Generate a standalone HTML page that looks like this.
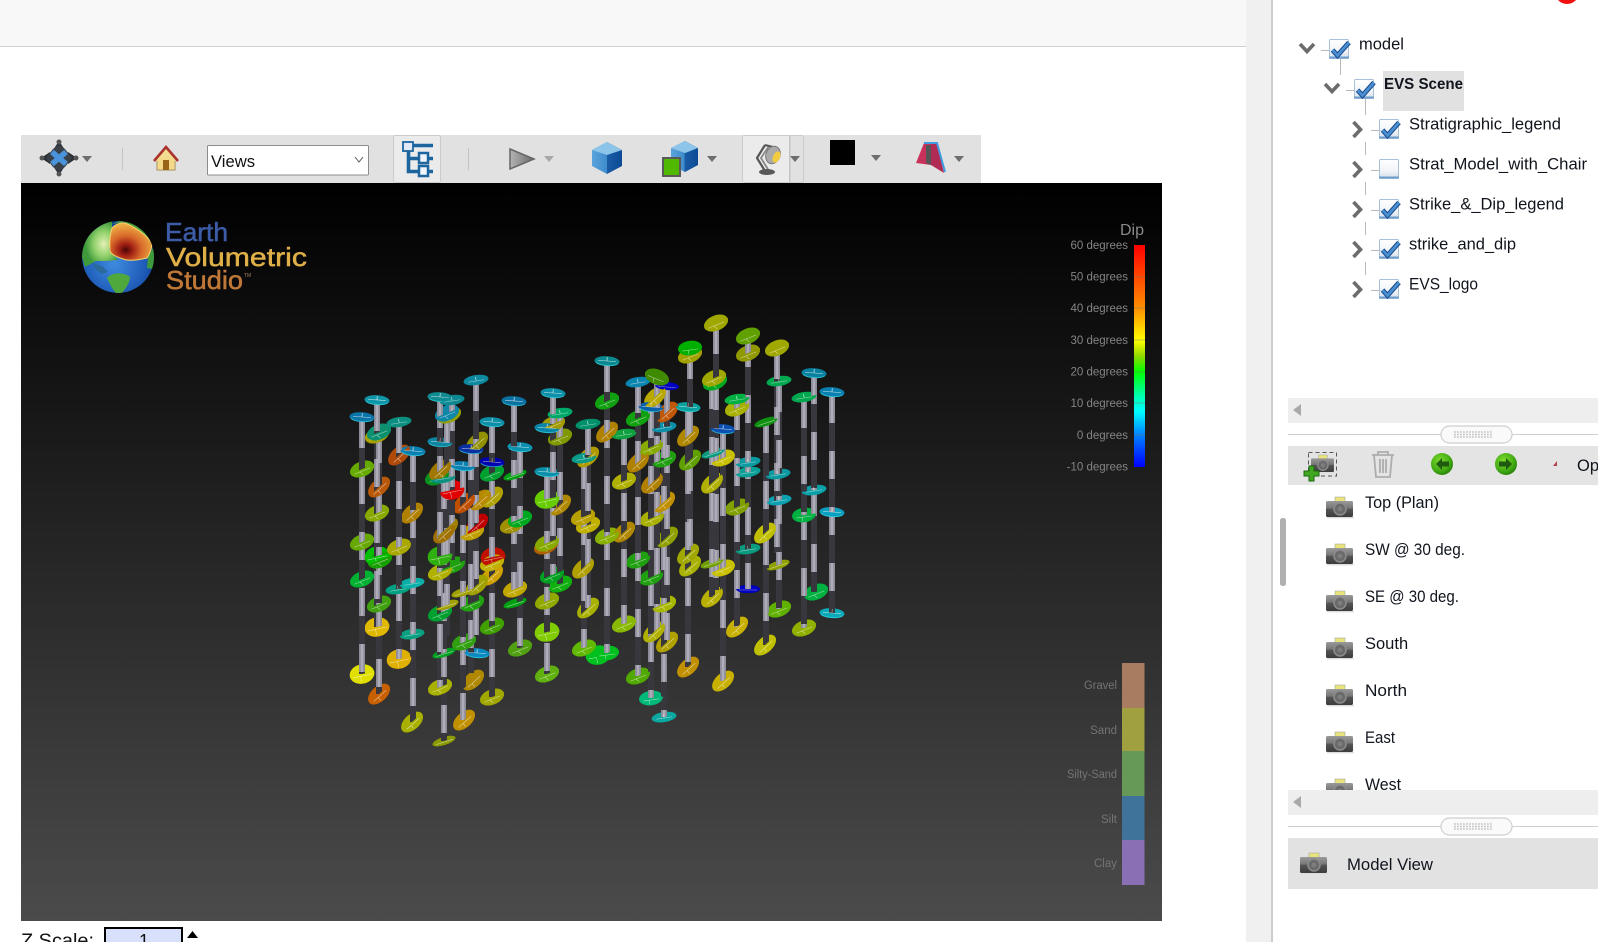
<!DOCTYPE html>
<html lang="en"><head><meta charset="utf-8"><title>EVS Model</title>
<style>
html,body{margin:0;padding:0;width:1598px;height:942px;overflow:hidden;background:#fff}
svg{position:absolute;left:0;top:0;display:block}
text{font-family:"Liberation Sans",sans-serif}
.v{visibility:var(--f,visible)}
.t{stroke:#fff;stroke-width:.6;opacity:.6;fill:none}
.p{font-size:16.5px;fill:#10141c}
.dg{font-size:11.5px;fill:#858585;text-anchor:end}
.lg{font-size:11.5px;fill:#747474;text-anchor:end}
.ar{fill:#6e6e6e}
.arl{fill:#a8a8a8}
.ln{stroke:#b9b9b9;stroke-width:1;fill:none}
.ch{stroke:#6c6c6c;stroke-width:3.6;fill:none}
</style></head><body>
<svg width="1598" height="942" viewBox="0 0 1598 942" xmlns="http://www.w3.org/2000/svg">
<defs>
<linearGradient id="bg" x1="0" y1="0" x2="0" y2="1"><stop offset="0" stop-color="#000"/><stop offset="1" stop-color="#4b4b4b"/></linearGradient>
<linearGradient id="rb" x1="0" y1="0" x2="0" y2="1"><stop offset="0" stop-color="#f00"/><stop offset=".143" stop-color="#ff4800"/><stop offset=".286" stop-color="#ff9000"/><stop offset=".43" stop-color="#ff0"/><stop offset=".5" stop-color="#90d800"/><stop offset=".571" stop-color="#0f0"/><stop offset=".68" stop-color="#00ffb0"/><stop offset=".75" stop-color="#0ff"/><stop offset=".857" stop-color="#0080ff"/><stop offset="1" stop-color="#00f"/></linearGradient>
<linearGradient id="cg" x1="0" y1="0" x2="0" y2="1"><stop offset="0" stop-color="#9a9a9a"/><stop offset=".45" stop-color="#777"/><stop offset=".5" stop-color="#555"/><stop offset="1" stop-color="#3c3c3c"/></linearGradient>
<linearGradient id="ck" x1="0" y1="0" x2="0" y2="1"><stop offset="0" stop-color="#fff"/><stop offset=".6" stop-color="#f2f4f8"/><stop offset="1" stop-color="#d3dde9"/></linearGradient>
<linearGradient id="cb" x1="0" y1="0" x2="1" y2="0"><stop offset="0" stop-color="#5aa4dc"/><stop offset=".5" stop-color="#3f8ccc"/><stop offset=".5" stop-color="#1a5ca6"/><stop offset="1" stop-color="#0c4a94"/></linearGradient>
<linearGradient id="pl" x1="0" y1="0" x2="1" y2="0"><stop offset="0" stop-color="#b4b4b4"/><stop offset="1" stop-color="#6a6a6a"/></linearGradient>
<radialGradient id="gl" cx=".45" cy=".6" r=".65"><stop offset="0" stop-color="#3f8be0"/><stop offset=".7" stop-color="#1c58b4"/><stop offset="1" stop-color="#0e3478"/></radialGradient>
<radialGradient id="gb" cx=".6" cy=".5" r=".5"><stop offset="0" stop-color="#e4f0b4"/><stop offset=".55" stop-color="#8fd06a"/><stop offset="1" stop-color="#3f9a3c"/></radialGradient>
<radialGradient id="gc" cx=".38" cy=".72" r=".72"><stop offset="0" stop-color="#4a0606"/><stop offset=".22" stop-color="#a02014"/><stop offset=".52" stop-color="#d8682a"/><stop offset="1" stop-color="#f0b848"/></radialGradient>
<radialGradient id="gn" cx=".4" cy=".35" r=".7"><stop offset="0" stop-color="#7fdc2c"/><stop offset=".7" stop-color="#3fa812"/><stop offset="1" stop-color="#277a08"/></radialGradient>
<clipPath id="ce"><circle cx="118" cy="257" r="36"/></clipPath>
<clipPath id="vw"><rect x="1288" y="485" width="310" height="305"/></clipPath>

<g id="cam"><rect x="9" y="0" width="10" height="5" fill="#e8e47a" stroke="#999" stroke-width=".5"/><rect x="0" y="4" width="27" height="16" rx="1.5" fill="url(#cg)"/><circle cx="14" cy="12" r="6" fill="#6a6a6a" stroke="#8c8c8c" stroke-width="1.5"/><circle cx="14" cy="12" r="2.4" fill="#7e7e7e"/><rect x="1" y="20" width="27" height="1.4" fill="#ddd"/></g>

<g id="cbx"><rect x=".5" y=".5" width="19" height="19" rx="1" fill="url(#ck)" stroke="#a9c0da"/><path d="M0 18.5H20" stroke="#6f9fcf" stroke-width="2"/></g>
<g id="cbc"><use href="#cbx"/><path d="M3.500 11L8.500 16.500L20 3.500" fill="none" stroke="#1c4f8e" stroke-width="4.800"/><path d="M3.500 11L8.500 16.500L20 3.500" fill="none" stroke="#4a90d2" stroke-width="2.600"/></g>
<path id="ard" d="M-5-3H5L0 3Z"/>

<g id="pill"><rect x="0" y="0" width="71" height="17" rx="8.5" fill="#fafafa" stroke="#cfcfcf" stroke-width="1.2"/><path d="M13 6H52M13 8.5H52M13 11H52" stroke="#c4c4c4" stroke-width="1.6" stroke-dasharray="1.8 1.2"/></g>

<g id="d" transform="rotate(-22)"><ellipse class="v" rx="12.6" ry="7.6"/><path d="M-12.600 0A12.600 7.600 0 0 0 12.600 0Z"/><path class="t" d="M-9 2H8M-3 2L-1 6"/></g>
<g id="e" transform="rotate(-42)"><ellipse class="v" rx="13" ry="7.6"/><path d="M-13 0A13 7.600 0 0 0 13 0Z"/><path class="t" d="M-9 2H8M-3 2V6"/></g>
<g id="f" transform="rotate(4)"><ellipse class="v" rx="12.5" ry="4.8"/><path d="M-12.5 0A12.5 4.8 0 0 0 12.5 0Z"/><path d="M-11 2A12 4.2 0 0 0 11 2" fill="none" stroke="#38e6f0" stroke-width="1" opacity=".55"/><path class="t" d="M-9 0H9M0 0V-4"/></g>
<g id="g" transform="rotate(-9)"><ellipse class="v" rx="12.5" ry="5"/><path d="M-12.5 0A12.5 5 0 0 0 12.5 0Z"/><path class="t" d="M-8 1H8M0 1V-3"/></g>
<g id="h" transform="rotate(-8)"><ellipse class="v" rx="12" ry="7.2"/><path d="M-12 0A12 7.200 0 0 0 12 0Z"/><path class="t" d="M-8 2H8M-2 2V6"/></g>
<g id="r" transform="rotate(-12)"><ellipse class="v" rx="12.4" ry="9.6"/><path d="M-12.400 0A12.400 9.600 0 0 0 12.400 0Z"/><path class="t" d="M-10 2H10M-2 2V8"/></g>
<g id="n" transform="rotate(-18)"><ellipse class="v" rx="12" ry="4"/><path d="M-12 0A12 4 0 0 0 12 0Z"/><path class="t" d="M-9 1H9"/></g>

<g id="D">
<use href="#f" x="362" y="417" fill="#0a74a8"/><use href="#f" x="377" y="400" fill="#0f95a8"/><use href="#g" x="399" y="422" fill="#0c8f80"/>
<use href="#d" x="377" y="435" fill="#a8a000"/><use href="#d" x="379" y="432" fill="#0c9070"/>
<use href="#d" x="362" y="469" fill="#66aa00"/><use href="#e" x="399" y="455" fill="#b04a08"/><use href="#f" x="413" y="451" fill="#0a80b0"/>
<use href="#e" x="379" y="487" fill="#b85808"/><use href="#d" x="377" y="513" fill="#88aa00"/><use href="#e" x="412" y="513" fill="#b08000"/>
<use href="#f" x="440" y="397" fill="#0f8a90"/><use href="#g" x="452" y="400" fill="#0c8890"/>
<use href="#d" x="449" y="415" fill="#90a000"/><use href="#d" x="447" y="413" fill="#0d86a8"/>
<use href="#g" x="476" y="380" fill="#0d8aa0"/><use href="#f" x="492" y="422" fill="#0d8fa8"/><use href="#f" x="514" y="401" fill="#0a70a0"/>
<use href="#f" x="440" y="442" fill="#0d85a0"/><use href="#e" x="477" y="442" fill="#909000"/><use href="#f" x="471" y="449" fill="#0a30a0"/>
<use href="#f" x="492" y="462" fill="#0000b0"/><use href="#f" x="463" y="466" fill="#0a80b0"/>
<use href="#d" x="437" y="477" fill="#089020"/><use href="#e" x="440" y="470" fill="#a07800"/><use href="#g" x="443" y="478" fill="#0a9080"/>
<use href="#f" x="520" y="447" fill="#0c90b0"/><use href="#d" x="492" y="473" fill="#00a030"/><use href="#n" x="515" y="475" fill="#00a010"/>
<use href="#f" x="547" y="472" fill="#0c8fa8"/><use href="#f" x="553" y="393" fill="#0d90a8"/><use href="#g" x="560" y="413" fill="#00a868"/>
<use href="#d" x="553" y="424" fill="#a09a00"/><use href="#f" x="547" y="428" fill="#0a85a8"/><use href="#d" x="560" y="437" fill="#809800"/>
<use href="#g" x="588" y="424" fill="#00906a"/><use href="#e" x="588" y="457" fill="#b09a00"/><use href="#g" x="584" y="458" fill="#0a9a88"/>
<use href="#r" x="547" y="499" fill="#66cc00"/><use href="#e" x="560" y="505" fill="#b08800"/>
<use href="#d" x="512" y="525" fill="#a09000"/><use href="#d" x="520" y="519" fill="#00a820"/><use href="#d" x="583" y="517" fill="#b8a000"/><use href="#d" x="588" y="525" fill="#c0b000"/>
<use href="#r" x="452" y="490" fill="#e00000"/><use href="#e" x="464" y="503" fill="#c05000"/><use href="#e" x="480" y="500" fill="#b88800"/><use href="#e" x="492" y="497" fill="#b0a000"/>
<use href="#e" x="477" y="524" fill="#c00000"/><use href="#e" x="447" y="528" fill="#a08000"/>
<use href="#d" x="362" y="542" fill="#66a800"/><use href="#r" x="377" y="556" fill="#00c000"/><use href="#d" x="380" y="560" fill="#18a000"/><use href="#d" x="399" y="547" fill="#a8a800"/>
<use href="#d" x="362" y="579" fill="#00b030"/><use href="#g" x="398" y="589" fill="#00a080"/><use href="#g" x="412" y="583" fill="#0ab0a8"/>
<use href="#d" x="379" y="604" fill="#40a010"/><use href="#r" x="377" y="627" fill="#e0b800"/><use href="#g" x="412" y="634" fill="#08a080"/>
<use href="#r" x="399" y="659" fill="#e0b000"/><use href="#r" x="362" y="674" fill="#e0e000"/><use href="#e" x="379" y="694" fill="#c86000"/>
<use href="#e" x="412" y="722" fill="#a8b000"/><use href="#r" x="440" y="556" fill="#30b010"/><use href="#d" x="453" y="565" fill="#20a010"/>
<use href="#d" x="440" y="572" fill="#b0b000"/><use href="#e" x="444" y="533" fill="#a07000"/><use href="#d" x="472" y="532" fill="#c0a000"/>
<use href="#r" x="493" y="557" fill="#c01000"/><use href="#d" x="492" y="563" fill="#c0b000"/><use href="#e" x="492" y="575" fill="#d0a000"/>
<use href="#e" x="477" y="585" fill="#a0a000"/><use href="#n" x="463" y="592" fill="#a0a000"/><use href="#n" x="447" y="605" fill="#a0a000"/>
<use href="#d" x="440" y="613" fill="#00a030"/><use href="#d" x="472" y="603" fill="#20a010"/><use href="#d" x="492" y="626" fill="#40a000"/>
<use href="#d" x="464" y="642" fill="#30a010"/><use href="#n" x="444" y="653" fill="#00a020"/><use href="#f" x="477" y="653" fill="#0a88c0"/>
<use href="#d" x="440" y="687" fill="#a8b000"/><use href="#e" x="473" y="680" fill="#b08800"/><use href="#d" x="492" y="697" fill="#a0a800"/>
<use href="#e" x="464" y="720" fill="#c09000"/><use href="#n" x="444" y="741" fill="#8a9a00"/>
<use href="#d" x="515" y="589" fill="#c0a800"/><use href="#n" x="515" y="603" fill="#00a010"/><use href="#d" x="520" y="648" fill="#50a010"/>
<use href="#d" x="546" y="546" fill="#b06000"/><use href="#d" x="547" y="543" fill="#88aa00"/><use href="#d" x="552" y="575" fill="#00a020"/><use href="#d" x="560" y="584" fill="#10b010"/>
<use href="#e" x="583" y="568" fill="#b0a000"/><use href="#d" x="547" y="601" fill="#90a800"/><use href="#r" x="547" y="632" fill="#80cc00"/>
<use href="#e" x="588" y="608" fill="#a8b000"/><use href="#d" x="547" y="674" fill="#60b010"/><use href="#d" x="584" y="648" fill="#60b800"/><use href="#r" x="598" y="655" fill="#00c020"/>
<use href="#f" x="607" y="361" fill="#0a8a90"/><use href="#d" x="607" y="401" fill="#10a010"/><use href="#e" x="607" y="432" fill="#b08000"/>
<use href="#g" x="638" y="382" fill="#0a85b0"/><use href="#d" x="657" y="377" fill="#408a00" transform="rotate(44 657 377)"/><use href="#n" x="667" y="386" fill="#0000c0" transform="rotate(22 667 386)"/>
<use href="#e" x="655" y="397" fill="#b8a800"/><use href="#f" x="651" y="407" fill="#0a60a8"/><use href="#e" x="667" y="412" fill="#c05808"/>
<use href="#d" x="638" y="418" fill="#10a010"/><use href="#g" x="664" y="427" fill="#0a90a8"/><use href="#f" x="688" y="407" fill="#0aa0a0"/>
<use href="#g" x="624" y="434" fill="#10a040"/><use href="#e" x="688" y="436" fill="#b08800"/><use href="#d" x="651" y="447" fill="#88aa00"/>
<use href="#e" x="638" y="462" fill="#b08000"/><use href="#d" x="664" y="459" fill="#20a010"/><use href="#d" x="624" y="481" fill="#b0b000"/>
<use href="#e" x="652" y="483" fill="#b08000"/><use href="#e" x="664" y="502" fill="#c09000"/><use href="#e" x="690" y="460" fill="#60a000"/>
<use href="#d" x="690" y="355" fill="#a0a000"/><use href="#h" x="690" y="348" fill="#00b000"/><use href="#d" x="716" y="323" fill="#a0a800"/>
<use href="#d" x="715" y="382" fill="#00a820"/><use href="#d" x="714" y="378" fill="#a0a800"/><use href="#d" x="748" y="336" fill="#60a000"/><use href="#d" x="748" y="353" fill="#909a00"/>
<use href="#d" x="777" y="348" fill="#a0a800"/><use href="#g" x="779" y="381" fill="#00a850"/><use href="#f" x="814" y="373" fill="#0a80a0"/><use href="#f" x="832" y="392" fill="#0a80b0"/>
<use href="#g" x="804" y="397" fill="#00a850"/><use href="#d" x="737" y="408" fill="#a8b000"/><use href="#g" x="737" y="399" fill="#00b040"/>
<use href="#n" x="766" y="422" fill="#109010"/><use href="#f" x="723" y="429" fill="#0a50b0"/><use href="#n" x="713" y="453" fill="#0a9a80"/><use href="#d" x="723" y="458" fill="#c8c000"/>
<use href="#g" x="748" y="462" fill="#0a9aa0"/><use href="#g" x="748" y="472" fill="#0aa098"/><use href="#g" x="778" y="474" fill="#0a9aa0"/><use href="#g" x="814" y="490" fill="#0aa0a8"/>
<use href="#g" x="779" y="500" fill="#0aa0b0"/><use href="#e" x="712" y="483" fill="#b0b000"/><use href="#d" x="737" y="507" fill="#80a000"/>
<use href="#h" x="804" y="515" fill="#00b040"/><use href="#f" x="832" y="512" fill="#0aa0c0"/><use href="#d" x="652" y="518" fill="#a8b000"/>
<use href="#d" x="607" y="536" fill="#88b000"/><use href="#e" x="624" y="532" fill="#b08800"/><use href="#d" x="638" y="560" fill="#20a010"/><use href="#d" x="651" y="577" fill="#20a010"/>
<use href="#e" x="667" y="537" fill="#90a000"/><use href="#e" x="688" y="554" fill="#a0a800"/><use href="#e" x="690" y="566" fill="#a8b000"/><use href="#e" x="765" y="533" fill="#c0c000"/>
<use href="#d" x="723" y="568" fill="#c8c000"/><use href="#g" x="748" y="549" fill="#0a9a80"/><use href="#n" x="712" y="563" fill="#70a000"/><use href="#n" x="778" y="565" fill="#90a000"/>
<use href="#n" x="748" y="589" fill="#0000c0" transform="rotate(18 748 589)"/><use href="#e" x="712" y="597" fill="#b8b000"/><use href="#d" x="664" y="604" fill="#a8b800"/>
<use href="#d" x="779" y="609" fill="#60b000"/><use href="#d" x="816" y="592" fill="#00b040"/><use href="#f" x="832" y="613" fill="#0aa8b8"/>
<use href="#d" x="624" y="624" fill="#88b800"/><use href="#e" x="737" y="627" fill="#c8b000"/><use href="#d" x="804" y="628" fill="#90b000"/>
<use href="#e" x="654" y="632" fill="#b0b000"/><use href="#e" x="667" y="642" fill="#b0a000"/><use href="#e" x="765" y="645" fill="#c0c000"/><use href="#h" x="607" y="653" fill="#00c020"/>
<use href="#e" x="688" y="667" fill="#c09000"/><use href="#d" x="638" y="676" fill="#50a800"/><use href="#e" x="723" y="681" fill="#c8b000"/>
<use href="#h" x="651" y="698" fill="#00b878"/><use href="#g" x="664" y="717" fill="#0aa8a0"/>
</g>

<path id="P" fill="none" d="M377 403V627M362 420V674M379 435V694M399 425V659M413 454V722M440 400V690M452 403V560M447 416V636M476 383V635M471 452V673M463 469V720M492 425V697M444 481V741M514 404V590M520 450V648M547 475V674M553 396V575M560 416V584M588 427V608M584 461V648M607 364V653M624 437V624M638 385V676M651 410V698M664 430V717M657 380V632M667 389V640M688 410V667M690 351V546M716 326V590M712 381V597M723 432V681M737 402V627M748 339V589M766 425V645M777 351V553M779 384V609M804 400V628M814 376V592M832 395V613"/>
</defs>

<!-- top band and gutter -->
<rect x="0" y="0" width="1246" height="46" fill="#f8f8f8"/>
<rect x="0" y="46" width="1246" height="1" fill="#cfcfcf"/>
<rect x="1246" y="0" width="25" height="942" fill="#f0f0f0"/>
<rect x="1271" y="0" width="2" height="942" fill="#cccccc"/>
<circle cx="1567" cy="-8" r="12" fill="#f01010"/>

<!-- toolbar -->
<rect x="21" y="135" width="960" height="48" fill="#e1e1e1"/>
<g>
 <!-- move -->
 <path d="M59 141L65 150H53Z M59 175L65 166H53Z M41 158L50 152V164Z M77 158L68 152V164Z" fill="#2a2f38"/>
 <path d="M53 149L59 145L65 149L72 158L65 167L59 171L53 167L46 158Z" fill="#3a4048"/>
 <path d="M52 152L66 164M66 152L52 164" stroke="#4a94dc" stroke-width="5.500"/>
 <circle cx="59" cy="142" r="2.500" fill="#555"/><circle cx="59" cy="174" r="2.500" fill="#555"/><circle cx="42" cy="158" r="2.500" fill="#555"/><circle cx="76" cy="158" r="2.500" fill="#555"/>
 <use href="#ard" x="87" y="159" class="ar"/>
 <rect x="122" y="148" width="1" height="22" fill="#c4c4c4"/>
 <!-- home -->
 <path d="M157 160V170H175V160" fill="#f7e9a8" stroke="#a88a50"/>
 <path d="M154 161L166 147L178 161" fill="#f3dc90" stroke="#a8322c" stroke-width="2.600"/>
 <rect x="158" y="158" width="16" height="11" fill="#f4d98a"/>
 <rect x="163" y="160" width="6" height="10" fill="#9a6418"/>
 <!-- select -->
 <rect x="207.500" y="145.500" width="161" height="29.500" rx="1" fill="#fff" stroke="#8c8c8c"/>
 <text x="211" y="167" font-size="17" fill="#111" textLength="44" lengthAdjust="spacingAndGlyphs">Views</text>
 <path d="M355 157L359 162L363 157" fill="none" stroke="#555" stroke-width="1"/>
 <!-- tree btn -->
 <rect x="393.500" y="135.500" width="47" height="47" rx="2" fill="#ebebeb" stroke="#cbcbcb"/>
 <path d="M412 145.500H433M408.500 150V171.500H420M408.500 158.500H420M427 158.500H433M427 171.500H433" fill="none" stroke="#1c659f" stroke-width="3.600"/>
 <rect x="403" y="142" width="10" height="9" fill="#dfeaf6" stroke="#1c659f" stroke-width="1.800"/>
 <rect x="419" y="153" width="9" height="10" fill="#f0f5fb" stroke="#1c659f" stroke-width="2.500"/>
 <rect x="419" y="166" width="9" height="10" fill="#f0f5fb" stroke="#1c659f" stroke-width="2.500"/>
 <rect x="468" y="148" width="1" height="22" fill="#c4c4c4"/>
 <!-- play -->
 <path d="M510 149L534 159L510 169Z" fill="url(#pl)" stroke="#666" stroke-width="1.500"/>
 <use href="#ard" x="549" y="159" class="arl"/>
 <!-- cube -->
 <path d="M607 142L622 150V166L607 174L592 166V150Z" fill="url(#cb)"/>
 <path d="M607 142L622 150L607 155L592 150Z" fill="#8cc4ea"/>
 <!-- cube 2 -->
 <path d="M685 141L698 148V165L685 172L671 165V148Z" fill="url(#cb)"/>
 <path d="M685 141L698 148L685 153L671 148Z" fill="#8cc4ea"/>
 <rect x="663" y="158" width="17" height="18" fill="#50b800" stroke="#5a5a5a" stroke-width="2"/>
 <use href="#ard" x="712" y="159" class="ar"/>
 <!-- lamp button -->
 <rect x="742.500" y="135.500" width="61" height="47" rx="2" fill="#e1e1e1" stroke="#cbcbcb"/>
 <rect x="743" y="136" width="46" height="46" fill="#ebebeb"/>
 <rect x="789" y="136" width="1.500" height="46" fill="#c4c4c4"/>
 <path d="M765 171L757 158L765 145" fill="none" stroke="#555" stroke-width="2.200"/>
 <path d="M769 171L761 158L769 146" fill="none" stroke="#888" stroke-width="1.800"/>
 <path d="M765 145L773 147" fill="none" stroke="#555" stroke-width="2"/>
 <ellipse cx="767" cy="172" rx="8" ry="3" fill="#5a5a5a"/>
 <ellipse cx="773" cy="155" rx="7" ry="9" transform="rotate(22 773 155)" fill="#aaa" stroke="#777"/>
 <ellipse cx="776.500" cy="157" rx="3.500" ry="6" transform="rotate(25 776.500 157)" fill="#f2cc40"/>
 <use href="#ard" x="795" y="159" class="ar"/>
 <!-- color -->
 <rect x="830" y="140" width="25" height="25" fill="#000"/>
 <use href="#ard" x="876" y="158" class="ar"/>
 <!-- prism -->
 <path d="M916 163L924 143L931 143L931 165Z" fill="#c8325a"/>
 <path d="M931 143L937 143L944 173L931 165Z" fill="#b02c54"/>
 <path d="M924 143L937 143L945 172" fill="none" stroke="#3f9ce0" stroke-width="2"/>
 <path d="M926 145L931 145L931 165L926 163Z" fill="#555"/>
 <use href="#ard" x="959" y="159" class="ar"/>
</g>

<!-- canvas -->
<rect x="21" y="183" width="1141" height="738" fill="url(#bg)"/>

<!-- logo -->
<g clip-path="url(#ce)">
 <circle cx="118" cy="257" r="36" fill="url(#gl)"/>
 <path d="M82 257C82 238 95 226 112 221L112 230L109 250L118 260L106 261L96 261L85 267Z" fill="url(#gb)"/>
 <path d="M112 224L122 220L140 224L156 240L152 244L125 222Z" fill="#4a9e3c"/>
 <path d="M148 256L158 240L158 270L147 268Z" fill="#3f9a3c"/>
 <path d="M107 278C112 272 124 272 130 277C130 283 124 292 118 296L112 288Z" fill="#4fa83c"/>
 <path d="M92 263L102 266L108 272L102 274L96 270Z" fill="#2a6a9c"/>
 <path d="M112 228Q118 222 125 223Q142 230 152 243Q152 250 147 258Q130 262 123 259Q110 255 110 250Q109 238 112 228Z" fill="url(#gc)" stroke="#f6d46a" stroke-width="1"/>
</g>
<text x="165" y="241" font-size="26" fill="#3d5ca8" stroke="#3d5ca8" stroke-width=".5" textLength="63" lengthAdjust="spacingAndGlyphs">Earth</text>
<text x="166" y="266" font-size="26" fill="#e0b048" stroke="#e0b048" stroke-width=".5" textLength="141" lengthAdjust="spacingAndGlyphs">Volumetric</text>
<text x="166" y="289" font-size="26" fill="#c07838" stroke="#c07838" stroke-width=".5" textLength="77" lengthAdjust="spacingAndGlyphs">Studio</text>
<text x="244" y="277" font-size="5" fill="#a08060">TM</text>

<!-- dip legend -->
<text x="1144" y="235" font-size="16" fill="#888" text-anchor="end">Dip</text>
<rect x="1134" y="245" width="11" height="222" fill="url(#rb)"/>
<path d="M1134 277H1145M1134 308H1145M1134 340H1145M1134 372H1145M1134 403H1145M1134 435H1145" stroke="#777" stroke-width=".7" opacity=".6"/>
<text class="dg" x="1128" y="249">60 degrees</text>
<text class="dg" x="1128" y="280.500">50 degrees</text>
<text class="dg" x="1128" y="312">40 degrees</text>
<text class="dg" x="1128" y="344">30 degrees</text>
<text class="dg" x="1128" y="375.500">20 degrees</text>
<text class="dg" x="1128" y="407">10 degrees</text>
<text class="dg" x="1128" y="439">0 degrees</text>
<text class="dg" x="1128" y="470.500">-10 degrees</text>

<!-- strat legend -->
<rect x="1122" y="663" width="22.500" height="45" fill="#a87c60"/>
<rect x="1122" y="708" width="22.500" height="43" fill="#a0a040"/>
<rect x="1122" y="751" width="22.500" height="45" fill="#669858"/>
<rect x="1122" y="796" width="22.500" height="44" fill="#3f7399"/>
<rect x="1122" y="840" width="22.500" height="45" fill="#8a6fb4"/>
<text class="lg" x="1117" y="689" textLength="33" lengthAdjust="spacingAndGlyphs">Gravel</text>
<text class="lg" x="1117" y="734">Sand</text>
<text class="lg" x="1117" y="778" textLength="50" lengthAdjust="spacingAndGlyphs">Silty-Sand</text>
<text class="lg" x="1117" y="823">Silt</text>
<text class="lg" x="1117" y="867">Clay</text>

<!-- strike and dip -->
<use href="#D"/>
<use href="#P" stroke="#37373d" stroke-width="6"/>
<use href="#P" stroke="#8e8c99" stroke-width="6" stroke-dasharray="28 28"/>
<use href="#P" stroke="#aeacb9" stroke-width="2.500" stroke-dasharray="28 28"/>
<use href="#D" style="--f:hidden"/>

<!-- z scale -->
<text x="21" y="947" font-size="19" fill="#111" textLength="73" lengthAdjust="spacingAndGlyphs">Z Scale:</text>
<rect x="105" y="928" width="77" height="20" fill="#d8e0fb" stroke="#000" stroke-width="2"/>
<text x="144" y="947" font-size="18" fill="#111" text-anchor="middle">1</text>
<path d="M187 938L192.500 931L198 938Z" fill="#000"/>

<!-- tree -->
<path class="ch" d="M1300 44L1307 51.500L1314 44"/>
<path class="ch" d="M1325 84L1332 91.500L1339 84"/>
<path class="ch" d="M1353.500 122L1360.500 129.500L1353.500 137M1353.500 162L1360.500 169.500L1353.500 177M1353.500 202L1360.500 209.500L1353.500 217M1353.500 242L1360.500 249.500L1353.500 257M1353.500 282L1360.500 289.500L1353.500 297"/>
<path class="ln" d="M1321 50.500H1329M1340.500 59V75M1346 90.500H1354M1365.500 99V115M1365.500 142V155M1365.500 182V195M1365.500 222V235M1365.500 262V275M1371 130.500H1379M1371 170.500H1379M1371 210.500H1379M1371 250.500H1379M1371 290.500H1379"/>
<use href="#cbc" x="1329" y="39"/>
<use href="#cbc" x="1354" y="79"/>
<use href="#cbc" x="1379" y="119"/>
<use href="#cbx" x="1379" y="159"/>
<use href="#cbc" x="1379" y="199"/>
<use href="#cbc" x="1379" y="239"/>
<use href="#cbc" x="1379" y="279"/>
<rect x="1383" y="71" width="81" height="40" fill="#e1e1e1"/>
<text class="p" x="1359" y="49.500">model</text>
<text x="1384" y="89" font-size="15.500" font-weight="700" fill="#10141c" textLength="79" lengthAdjust="spacingAndGlyphs">EVS Scene</text>
<text class="p" x="1409" y="129.500" textLength="152" lengthAdjust="spacingAndGlyphs">Stratigraphic_legend</text>
<text class="p" x="1409" y="169.500" textLength="178" lengthAdjust="spacingAndGlyphs">Strat_Model_with_Chair</text>
<text class="p" x="1409" y="209.500" textLength="155" lengthAdjust="spacingAndGlyphs">Strike_&amp;_Dip_legend</text>
<text class="p" x="1409" y="249.500" textLength="107" lengthAdjust="spacingAndGlyphs">strike_and_dip</text>
<text class="p" x="1409" y="289.500" textLength="69" lengthAdjust="spacingAndGlyphs">EVS_logo</text>

<!-- horizontal scroll + divider 1 -->
<rect x="1288" y="398" width="310" height="25" fill="#eeeeee"/>
<path d="M1293 410L1301 404V416Z" fill="#aaa"/>
<rect x="1288" y="434" width="310" height="1" fill="#cfcfcf"/>
<use href="#pill" x="1441" y="426"/>

<!-- views toolbar -->
<rect x="1288" y="446" width="310" height="39" fill="#e4e4e4"/>
<rect x="1308.500" y="452.500" width="28" height="23.500" fill="none" stroke="#555" stroke-dasharray="4 3"/>
<use href="#cam" transform="translate(1311 455) scale(.85)"/>
<path d="M1309 466H1314V471H1319V476H1314V481H1309V476H1304V471H1309Z" fill="#3fa820" stroke="#1a6a10"/>
<path d="M1372 455H1394M1378 455V452H1388V455M1374 455L1376 477H1390L1392 455M1380 459V473M1383 459V473M1386 459V473" fill="none" stroke="#adadad" stroke-width="1.800"/>
<circle cx="1442" cy="464" r="11" fill="url(#gn)"/>
<path d="M1436 464L1442 458V461.500H1449V466.500H1442V470Z" fill="#1f5a10"/>
<circle cx="1506" cy="464" r="11" fill="url(#gn)"/>
<path d="M1512 464L1506 458V461.500H1499V466.500H1506V470Z" fill="#1f5a10"/>
<path d="M1553 466H1557V461Z" fill="#b04050"/>
<text class="p" x="1577" y="471">Op</text>

<!-- views list -->
<g clip-path="url(#vw)">
 <use href="#cam" x="1326" y="497"/><text class="p" x="1365" y="508" textLength="74" lengthAdjust="spacingAndGlyphs">Top (Plan)</text>
 <use href="#cam" x="1326" y="544"/><text class="p" x="1365" y="555" textLength="100" lengthAdjust="spacingAndGlyphs">SW @ 30 deg.</text>
 <use href="#cam" x="1326" y="591"/><text class="p" x="1365" y="602" textLength="94" lengthAdjust="spacingAndGlyphs">SE @ 30 deg.</text>
 <use href="#cam" x="1326" y="638"/><text class="p" x="1365" y="649">South</text>
 <use href="#cam" x="1326" y="685"/><text class="p" x="1365" y="696" textLength="42" lengthAdjust="spacingAndGlyphs">North</text>
 <use href="#cam" x="1326" y="732"/><text class="p" x="1365" y="743" textLength="30" lengthAdjust="spacingAndGlyphs">East</text>
 <use href="#cam" x="1326" y="779"/><text class="p" x="1365" y="790" textLength="36" lengthAdjust="spacingAndGlyphs">West</text>
</g>
<rect x="1280" y="518" width="6" height="68" rx="2.500" fill="#b0b0b0"/>

<rect x="1288" y="790" width="310" height="25" fill="#eeeeee"/>
<path d="M1293 802L1301 796V808Z" fill="#aaa"/>
<rect x="1288" y="826" width="310" height="1" fill="#cfcfcf"/>
<use href="#pill" x="1441" y="818"/>

<rect x="1288" y="838" width="310" height="51" fill="#e2e2e2"/>
<use href="#cam" x="1300" y="853"/>
<text class="p" x="1347" y="870" textLength="86" lengthAdjust="spacingAndGlyphs">Model View</text>
</svg>
</body></html>
